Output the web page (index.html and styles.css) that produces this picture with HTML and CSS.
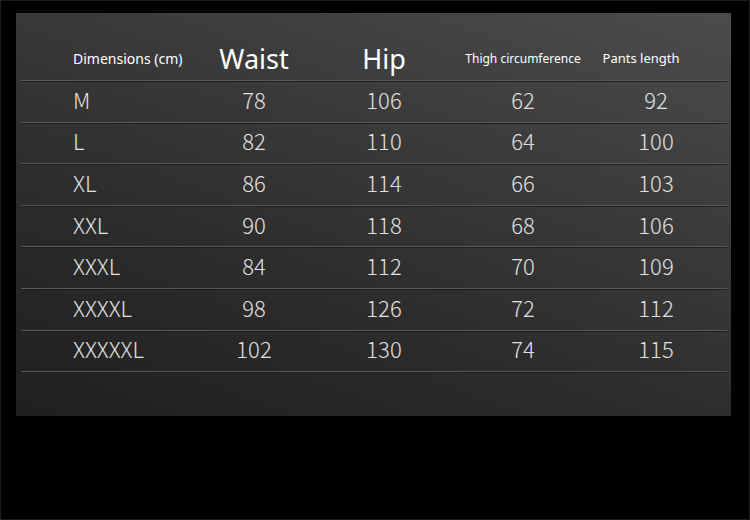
FILE: index.html
```html
<!DOCTYPE html>
<html>
<head>
<meta charset="utf-8">
<link rel="stylesheet" href="styles.css">
</head>
<body>
<div class="page">
  <div class="panel">
    <div class="table">
      <div class="row head">
        <div class="cell label h-small">Dimensions (cm)</div>
        <div class="cell h-big">Waist</div>
        <div class="cell h-big">Hip</div>
        <div class="cell h-small h-thigh">Thigh circumference</div>
        <div class="cell h-small h-pants">Pants length</div>
      </div>
      <div class="row"><div class="cell label">M</div><div class="cell">78</div><div class="cell">106</div><div class="cell">62</div><div class="cell">92</div></div>
      <div class="row"><div class="cell label">L</div><div class="cell">82</div><div class="cell">110</div><div class="cell">64</div><div class="cell">100</div></div>
      <div class="row"><div class="cell label">XL</div><div class="cell">86</div><div class="cell">114</div><div class="cell">66</div><div class="cell">103</div></div>
      <div class="row"><div class="cell label">XXL</div><div class="cell">90</div><div class="cell">118</div><div class="cell">68</div><div class="cell">106</div></div>
      <div class="row"><div class="cell label">XXXL</div><div class="cell">84</div><div class="cell">112</div><div class="cell">70</div><div class="cell">109</div></div>
      <div class="row"><div class="cell label">XXXXL</div><div class="cell">98</div><div class="cell">126</div><div class="cell">72</div><div class="cell">112</div></div>
      <div class="row"><div class="cell label">XXXXXL</div><div class="cell">102</div><div class="cell">130</div><div class="cell">74</div><div class="cell">115</div></div>
    </div>
  </div>
</div>
</body>
</html>
```
FILE: styles.css
```css
html, body {
  margin: 0;
  padding: 0;
  background: #000;
}
.page {
  width: 750px;
  height: 520px;
  box-sizing: border-box;
  border: 1px solid #1c1c1c;
  background: #000;
  padding: 12px 0 0 15px;
  font-family: "Noto Sans CJK SC", "Noto Sans", sans-serif;
}
.panel {
  width: 715px;
  height: 403px;
  background: linear-gradient(200deg, #4c4c4c 0%, #3d3d3d 30%, #2c2c2c 65%, #1f1f1f 100%);
  padding-left: 5px;
  box-sizing: border-box;
}
.table {
  width: 706px;
}
.row {
  display: grid;
  grid-template-columns: 180px 106px 154px 124px 142px;
  align-items: center;
  height: 41.6px;
  box-sizing: border-box;
  border-bottom: 1px solid #585858;
  box-shadow: 0 1px 0 #1e1e1e;
  padding-bottom: 5px;
  color: #e0e0e0;
  font-size: 22px;
  font-weight: 300;
  line-height: 1;
}
.row.head {
  height: 68px;
  padding-top: 24px;
  padding-bottom: 0;
  color: #fff;
  font-weight: 400;
}
.cell {
  text-align: center;
  white-space: nowrap;
}
.cell.label {
  text-align: left;
  padding-left: 52px;
}
.h-big {
  font-family: "Noto Sans", sans-serif;
  font-size: 27px;
}
.h-small {
  font-family: "Noto Sans", sans-serif;
  font-size: 14px;
}
.h-thigh {
  font-size: 12px;
}
.h-pants {
  font-size: 13px;
  padding-right: 30px;
}
```
